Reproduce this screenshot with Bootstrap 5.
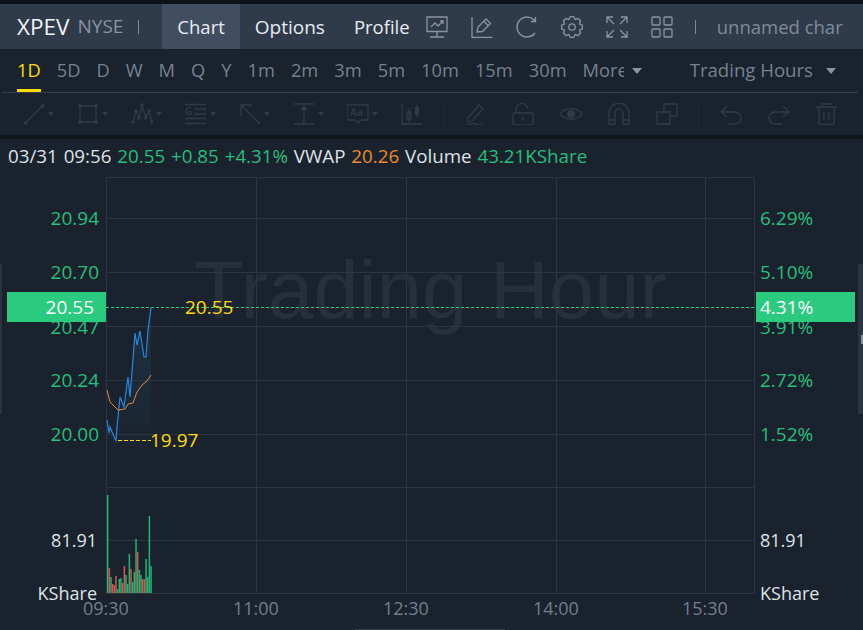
<!DOCTYPE html>
<html lang="en">
<head>
    <meta charset="UTF-8">
    <title>XPEV Chart</title>
    <link href="https://cdn.jsdelivr.net/npm/bootstrap@5.3.0/dist/css/bootstrap.min.css" rel="stylesheet">
    <style>
        body { width: 863px; height: 630px; overflow: hidden; background: #1a222d; color: #dfe3e8; font-family: "Open Sans", "Noto Sans", sans-serif; font-size: 19px; }
        .top-strip { height: 4px; background: #0e1319; }
        .head-bar { height: 45px; background: #2f3a4b; color: #e8ebef; padding-left: 17px; }
        .head-bar .sym { font-size: 22.500px; color: #f2f4f6; }
        .head-bar .exch { color: #8a94a3; margin-left: 8px; }
        .sep { width: 1px; height: 14px; background: #7e8897; }
        .sep-a { margin: 0 23px 0 15px; }
        .sep-b { margin: 0 21px 0 22px; }
        .head-tab { height: 45px; line-height: 45px; padding: 0 15px; font-size: 18.500px; color: #e8ebef; }
        .head-tab.opt { font-size: 19px; line-height: 47px; padding-right: 14px; }
        .head-tab.on { background: #414e62; }
        .head-icons { margin-left: 1px; gap: 23px; }
        .head-ico { width: 22px; height: 22px; fill: none; stroke: #8a94a3; stroke-width: 1.3; }
        .chart-name { color: #7f8a99; font-size: 18.500px; white-space: nowrap; }
        .period-row { height: 44px; margin: 0 5px 0 2px; padding-left: 15px; border-bottom: 1px solid #333d4b; color: #76818f; font-size: 18.300px; }
        .period { height: 43px; line-height: 42px; position: relative; }
        .period.on { color: #ffdd00; }
        .period.on::after { content: ""; position: absolute; left: 0; right: 0; bottom: 0; height: 3px; background: #ffdd00; }
        .period.hours { font-size: 18.600px; }
        .more-clip { width: 41px; overflow: hidden; white-space: nowrap; }
        .caret-d { width: 0; height: 0; border: 5px solid transparent; border-top: 6px solid #8a94a3; border-bottom: 0; display: inline-block; }
        .hours-caret { margin: 0 22px 0 13px; }
        .tool-row { height: 42px; padding-left: 23px; }
        .tool-ico { width: 22px; height: 22px; flex: none; fill: none; stroke: #303a47; stroke-width: 1.3; }
        .tool-ico .solid { fill: #303a47; stroke: none; }
        .tool-ico text { fill: #303a47; stroke: none; font-family: "Open Sans", sans-serif; font-weight: 600; }
        .tool-g { width: 54px; flex: none; display: flex; align-items: center; }
        .tool-s { width: 48px; flex: none; display: flex; align-items: center; }
        .tool-end { width: 42px; flex: none; display: flex; align-items: center; }
        .tool-caret { width: 0; height: 0; margin-left: 3px; border: 3px solid transparent; border-top: 4px solid #303a47; border-bottom: 0; }
        .tool-sep { width: 1px; height: 24px; background: #212935; flex: none; }
        .pen-gap { margin-left: 20px; }
        .undo-gap { margin-left: 21px; }
        .thin-strip { height: 4px; background: #10151b; }
        .info-row { height: 38px; line-height: 34px; padding-left: 8px; white-space: nowrap; font-size: 18.750px; word-spacing: 1px; }
        .up { color: #26bf7c; }
        .vw { color: #ee8b2c; }
        .chart-box { position: relative; height: 453px; }
        .chart-box svg { position: absolute; left: 0; top: 0; }
        .wmark { position: absolute; left: 194px; top: 64px; font-family: "Liberation Sans", Arial, sans-serif; font-size: 81.500px; line-height: 1.2; color: #272f3b; white-space: nowrap; }
        .lab { position: absolute; line-height: 24px; white-space: nowrap; }
        .lab-l { right: 764px; text-align: right; }
        .lab-v { right: 766px; text-align: right; font-size: 18px; }
        .lab-r { left: 760px; }
        .lab-n { font-size: 18px; }
        .tag { position: absolute; top: 115px; height: 30px; line-height: 30px; width: 99px; background: #2acb7f; color: #fff; }
        .tag-l { left: 7px; text-align: right; padding-right: 12px; }
        .tag-r { left: 756px; padding-left: 4px; }
        .hilo { color: #ffdd00; }
        .t-lab { color: #737e8c; font-size: 18px; }
        .edge { position: absolute; top: 87px; height: 150px; background: #2a3340; }
        .edge-l { left: 0; width: 2px; }
        .edge-r { left: 858px; width: 5px; }
        .edge-knob { position: absolute; left: 861px; top: 158px; width: 2px; height: 9px; background: #8a94a3; }
        .foot-line { position: absolute; left: 355px; top: 452px; width: 150px; height: 1px; background: #3a4552; }
    </style>
</head>
<body>
    <div class="top-strip"></div>

    <!-- header -->
    <div class="head-bar d-flex align-items-center">
        <span class="sym">XPEV</span><span class="exch">NYSE</span>
        <span class="sep sep-a"></span>
        <span class="head-tab on">Chart</span>
        <span class="head-tab opt">Options</span>
        <span class="head-tab">Profile</span>
        <div class="head-icons d-flex">
            <svg class="head-ico" viewBox="0 0 22 22"><path d="M1 1h20v14.500H1zM11 15.500V21M4 21h14M5 11l4-4 3 3 5-5M14 5h3v3"/></svg>
            <svg class="head-ico" viewBox="0 0 22 22"><path d="M1 1v20.500h20.500M6 16l1-5 8-8 4.500 4.500-8 8zM13 5.500l4 4"/></svg>
            <svg class="head-ico" viewBox="0 0 22 22"><path d="M19 17A10 10 0 1 1 19 5M19.500 1v4.500H15"/></svg>
            <svg class="head-ico" viewBox="0 0 22 22"><circle cx="11" cy="11" r="3.200"/><path id="gear" stroke-linejoin="round" d=""/></svg>
            <svg class="head-ico" viewBox="0 0 22 22"><path d="M1 7V1h6M1 1l7 7M21 7V1h-6M21 1l-7 7M1 15v6h6M1 21l7-7M21 15v6h-6M21 21l-7-7"/></svg>
            <svg class="head-ico" viewBox="0 0 22 22"><rect x="1" y="1" width="8" height="8" rx="1"/><rect x="13" y="1" width="8" height="8" rx="1"/><rect x="1" y="13" width="8" height="8" rx="1"/><rect x="13" y="13" width="8" height="8" rx="1"/></svg>
        </div>
        <span class="sep sep-b"></span>
        <span class="chart-name">unnamed char</span>
    </div>

    <!-- periods -->
    <div class="period-row d-flex align-items-center">
        <span class="period on">1D</span>
        <span class="period ms-3">5D</span>
        <span class="period ms-3">D</span>
        <span class="period ms-3">W</span>
        <span class="period ms-3">M</span>
        <span class="period ms-3">Q</span>
        <span class="period ms-3">Y</span>
        <span class="period ms-3">1m</span>
        <span class="period ms-3">2m</span>
        <span class="period ms-3">3m</span>
        <span class="period ms-3">5m</span>
        <span class="period ms-3">10m</span>
        <span class="period ms-3">15m</span>
        <span class="period ms-3">30m</span>
        <span class="period ms-3 more-clip">More</span><span class="caret-d ms-2"></span>
        <span class="period hours ms-auto">Trading Hours</span><span class="caret-d hours-caret"></span>
    </div>

    <!-- drawing tools -->
    <div class="tool-row d-flex align-items-center">
        <div class="tool-g">
            <svg class="tool-ico" viewBox="0 0 22 22"><path d="M2.500 20L19.500 3"/><circle class="solid" cx="2.500" cy="20" r="2"/><circle class="solid" cx="19.500" cy="3" r="2"/></svg>
            <span class="tool-caret"></span>
        </div>
        <div class="tool-g">
            <svg class="tool-ico" viewBox="0 0 22 22"><path d="M3 3h16v16H3z"/><circle class="solid" cx="3" cy="3" r="2"/><circle class="solid" cx="19" cy="3" r="2"/><circle class="solid" cx="3" cy="19" r="2"/><circle class="solid" cx="19" cy="19" r="2"/></svg>
            <span class="tool-caret"></span>
        </div>
        <div class="tool-g">
            <svg class="tool-ico" viewBox="0 0 22 22"><path d="M2 19L5 8l3 7 3-13 4 13 3-7 3 11"/><circle class="solid" cx="2" cy="19" r="1.800"/><circle class="solid" cx="5" cy="8" r="1.800"/><circle class="solid" cx="8" cy="15" r="1.800"/><circle class="solid" cx="11" cy="2" r="1.800"/><circle class="solid" cx="15" cy="15" r="1.800"/><circle class="solid" cx="18" cy="8" r="1.800"/><circle class="solid" cx="21" cy="19" r="1.800"/></svg>
            <span class="tool-caret"></span>
        </div>
        <div class="tool-g">
            <svg class="tool-ico" viewBox="0 0 22 22"><path d="M0 1.500h21M9 6h12M9 11h12M0 15.500h21M0 20.500h21"/><text x="0" y="12" font-size="10">G</text></svg>
            <span class="tool-caret"></span>
        </div>
        <div class="tool-g">
            <svg class="tool-ico" viewBox="0 0 22 22"><path d="M2 13V2h11M2 2l19 19"/></svg>
            <span class="tool-caret"></span>
        </div>
        <div class="tool-g">
            <svg class="tool-ico" viewBox="0 0 22 22"><path d="M1 1h20M1 21h20M11 1v20"/><path class="solid" d="M7 7l4-4 4 4z"/></svg>
            <span class="tool-caret"></span>
        </div>
        <div class="tool-g">
            <svg class="tool-ico" viewBox="0 0 22 22"><path d="M0 2h21v15h-7l-3 3-3-3H0z"/><text x="3" y="13" font-size="10.500">Aa</text></svg>
            <span class="tool-caret"></span>
        </div>
        <div class="tool-end">
            <svg class="tool-ico" viewBox="0 0 22 22"><path d="M1 1v20h20M8 5v15M6 9h4v7H6z"/><path d="M16 1v14"/><rect class="solid" x="14" y="4" width="4" height="8"/></svg>
        </div>
        <span class="tool-sep"></span>
        <div class="tool-s pen-gap">
            <svg class="tool-ico" viewBox="0 0 22 22"><path d="M4 15L15 2l4 4L8 18l-4 1zM3 22c4-1 6-2 9-1s4 1 7 1"/></svg>
        </div>
        <div class="tool-s">
            <svg class="tool-ico" viewBox="0 0 22 22"><rect x="1" y="10" width="20" height="12" rx="2"/><path d="M4 10V7a6 6 0 0 1 12-1M11 14v4"/></svg>
        </div>
        <div class="tool-s">
            <svg class="tool-ico" viewBox="0 0 22 22"><path d="M0 11C5 4 17 4 22 11 17 18 5 18 0 11z"/><circle class="solid" cx="11" cy="11" r="4"/></svg>
        </div>
        <div class="tool-s">
            <svg class="tool-ico" viewBox="0 0 22 22"><path d="M1 21V10a10 10 0 0 1 20 0v11h-6V10a4 4 0 0 0-8 0v11zM1 17h6M15 17h6"/></svg>
        </div>
        <div class="tool-end">
            <svg class="tool-ico" viewBox="0 0 22 22"><path d="M8 8V1h13v12h-7M1 9h13v12H1z"/></svg>
        </div>
        <span class="tool-sep"></span>
        <div class="tool-s undo-gap">
            <svg class="tool-ico" viewBox="0 0 22 22"><path d="M7 3L1 9l6 5M1 9h14a6 6 0 0 1 0 12H8"/></svg>
        </div>
        <div class="tool-s">
            <svg class="tool-ico" viewBox="0 0 22 22"><path d="M15 3l6 6-6 5M21 9H7a6 6 0 0 0 0 12h7"/></svg>
        </div>
        <div class="tool-s">
            <svg class="tool-ico" viewBox="0 0 22 22"><path d="M0 4h21M5 1h11M3 5v15a1.500 1.500 0 0 0 1.500 1.500h12a1.500 1.500 0 0 0 1.500-1.500V5M8 9v8M13 9v8"/></svg>
        </div>
    </div>
    <div class="thin-strip"></div>

    <!-- quote line -->
    <div class="info-row">03/31 09:56 <span class="up">20.55 +0.85 +4.31%</span> VWAP <span class="vw">20.26</span> Volume <span class="up">43.21KShare</span></div>

    <!-- chart -->
    <div class="chart-box">
        <div class="wmark">Trading Hour</div>
        <svg id="plot" width="863" height="453" viewBox="0 177 863 453">
            <defs>
                <linearGradient id="fade" x1="0" y1="0" x2="0" y2="1">
                    <stop offset="0" stop-color="#1f4258" stop-opacity=".55"/>
                    <stop offset="1" stop-color="#1f3a4c" stop-opacity=".1"/>
                </linearGradient>
            </defs>
            <g stroke="#2b3541" fill="none">
                <path d="M106.500 177V594M256.500 177V594M406.500 177V594M556.500 177V594M705.500 177V594M754.500 177V594"/>
                <path d="M106 177.500H754M106 218.500H754M106 272.500H754M106 326.500H754M106 380.500H754M106 434.500H754M106 487.500H754M106 540.500H754M106 593.500H754"/>
            </g>
            <path d="M107 420L109 433L110 427L112 432L116 441L117 427L120 397L124 407L128 377L130 397L135 333L137 345L140 331L144 357L146 357L148 330L151 308V447H107Z" fill="url(#fade)"/>
            <polyline fill="none" stroke="#2a86dd" stroke-width="1.200" points="107,420 109,433 110,427 112,432 116,441 117,427 120,397 124,407 128,377 130,397 135,333 137,345 140,331 144,357 146,357 148,330 151,308"/>
            <polyline fill="none" stroke="#e08a37" stroke-width="1" points="107,390 110,402 115,407 118,410 125,409 128,404 133,403 137,392 142,385 147,381 151,375"/>
            <path d="M106 307.500H754" stroke="#2acb7f" stroke-dasharray="3 2"/>
            <path d="M118 440.500H151" stroke="#ffdd00" stroke-dasharray="4 2"/>
            <g id="bars"></g>
        </svg>
        <span class="edge edge-l"></span>
        <span class="edge edge-r"></span>
        <span class="edge-knob"></span>
        <span class="lab lab-l up" style="top:29px">20.94</span>
        <span class="lab lab-l up" style="top:83px">20.70</span>
        <span class="lab lab-l up" style="top:138px">20.47</span>
        <span class="lab lab-l up" style="top:191px">20.24</span>
        <span class="lab lab-l up" style="top:245px">20.00</span>
        <span class="lab lab-v" style="top:351px">81.91</span>
        <span class="lab lab-v" style="top:404px">KShare</span>
        <span class="lab lab-r up" style="top:29px">6.29%</span>
        <span class="lab lab-r up" style="top:83px">5.10%</span>
        <span class="lab lab-r up" style="top:138px">3.91%</span>
        <span class="lab lab-r up" style="top:191px">2.72%</span>
        <span class="lab lab-r up" style="top:245px">1.52%</span>
        <span class="lab lab-r lab-n" style="top:351px">81.91</span>
        <span class="lab lab-r lab-n" style="top:404px">KShare</span>
        <span class="tag tag-l">20.55</span>
        <span class="tag tag-r">4.31%</span>
        <span class="lab hilo" style="left:185px;top:118px">20.55</span>
        <span class="lab hilo" style="left:150px;top:251px">19.97</span>
        <span class="lab t-lab" style="left:83px;top:419px">09:30</span>
        <span class="lab t-lab" style="left:233px;top:419px">11:00</span>
        <span class="lab t-lab" style="left:383px;top:419px">12:30</span>
        <span class="lab t-lab" style="left:533px;top:419px">14:00</span>
        <span class="lab t-lab" style="left:682px;top:419px">15:30</span>
        <span class="foot-line"></span>
    </div>

    <script>
        // volume bars: top y, 1 = up
        const bars = [[495,1],[568,0],[577,1],[584,0],[585,0],[576,0],[589,1],[579,1],[578,1],[583,0],[566,0],[575,1],[584,1],[554,1],[569,0],[582,1],[572,1],[539,1],[552,0],[570,1],[575,1],[579,0],[579,0],[559,1],[577,1],[516,1],[566,1]];
        document.getElementById('bars').innerHTML = bars.map((b, i) =>
            `<rect x="${(106.9 + i * 1.67).toFixed(2)}" y="${b[0]}" width="1.5" height="${593 - b[0]}" fill="${b[1] ? '#22b573' : '#d9534f'}"/>`).join('');

        // gear outline, 8 lobes
        let gear = '';
        for (let k = 0; k < 8; k++) {
            const a = k * Math.PI / 4;
            const pts = [[a - 0.17, 10.5], [a + 0.17, 10.5], [a + Math.PI / 8, 8]];
            pts.forEach(p => {
                const x = (11 + p[1] * Math.sin(p[0])).toFixed(2);
                const y = (11 - p[1] * Math.cos(p[0])).toFixed(2);
                gear += (gear ? 'L' : 'M') + x + ' ' + y;
            });
        }
        document.getElementById('gear').setAttribute('d', gear + 'Z');
    </script>
</body>
</html>
